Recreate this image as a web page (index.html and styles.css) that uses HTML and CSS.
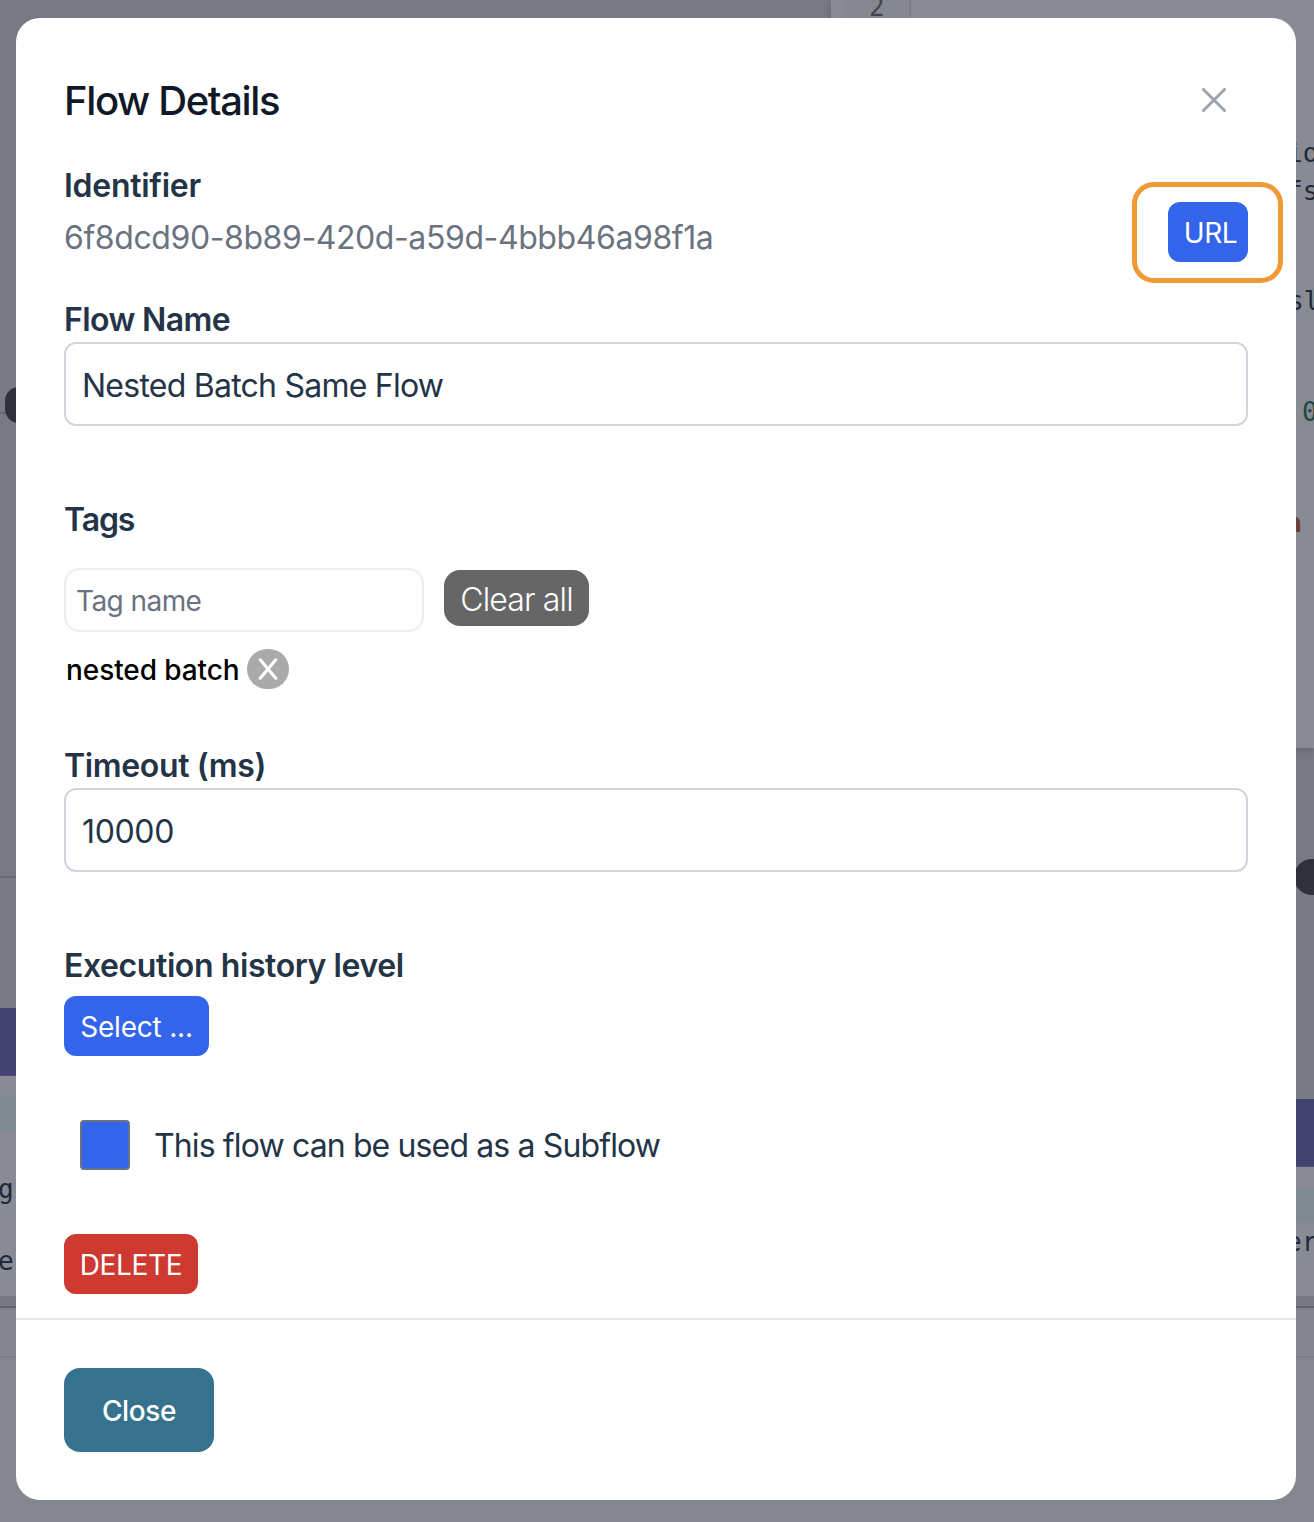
FILE: index.html
```html
<!DOCTYPE html>
<html lang="en">
<head>
<meta charset="utf-8">
<title>Flow Details</title>
<link rel="stylesheet" href="styles.css">
</head>
<body>
<div class="canvas" aria-hidden="true">
  <div class="editor"></div>
  <div class="gutter">2</div>
  <span class="code code-io">io</span>
  <span class="code code-fs">fs</span>
  <span class="code code-sl">sl</span>
  <span class="code code-num">0</span>
  <span class="code code-str">a</span>
  <div class="wire wire-top"></div>
  <div class="wire wire-bottom"></div>
  <div class="port port-left"></div>
  <div class="port port-right"></div>
  <div class="node node-left"><div class="node-title"></div><div class="node-band"></div></div>
  <div class="node node-right"><div class="node-title"></div><div class="node-band"></div></div>
  <div class="console"></div>
  <span class="code code-g">g</span>
  <span class="code code-e">e</span>
  <span class="code code-er">er</span>
</div>

<div class="modal" role="dialog" aria-labelledby="title">
  <div class="body">
    <header class="header">
      <h1 class="title" id="title">Flow Details</h1>
      <button class="dismiss" aria-label="Dismiss">
        <svg width="24" height="24" viewBox="0 0 24 24" fill="none" stroke="currentColor" stroke-width="3" stroke-linecap="round"><path d="M1.5 1.5l21 21M22.5 1.5l-21 21"/></svg>
      </button>
    </header>

    <section class="identifier">
      <div>
        <h2 class="label label-id">Identifier</h2>
        <p class="uuid">6f8dcd90-8b89-420d-a59d-4bbb46a98f1a</p>
      </div>
      <div class="url-wrap"><button class="btn btn-url">URL</button><div class="highlight"></div></div>
    </section>

    <section class="field">
      <label class="label label-name" for="name">Flow Name</label>
      <input class="input input-name" id="name" value="Nested Batch Same Flow">
    </section>

    <section class="tags">
      <h2 class="label label-tags">Tags</h2>
      <div class="tag-row">
        <input class="tag-input" placeholder="Tag name">
        <button class="clear">Clear all</button>
      </div>
      <div class="tag"><span class="tag-name">nested batch</span><button class="tag-remove" aria-label="Remove tag"><svg width="20" height="22" viewBox="0 0 20 22" fill="none" stroke="currentColor" stroke-width="3.1" stroke-linecap="round"><path d="M2.2 1.8l15.6 18.4M17.8 1.8L2.2 20.2"/></svg></button></div>
    </section>

    <section class="field">
      <label class="label label-timeout" for="timeout">Timeout (ms)</label>
      <input class="input input-timeout" id="timeout" value="10000">
    </section>

    <section class="history">
      <h2 class="label label-history">Execution history level</h2>
      <button class="btn btn-select">Select ...</button>
    </section>

    <label class="check"><span class="box"></span><span class="check-text">This flow can be used as a Subflow</span></label>

    <button class="btn btn-delete">DELETE</button>
  </div>
  <footer class="footer"><button class="close">Close</button></footer>
</div>
</body>
</html>
```
FILE: styles.css
```css
* { box-sizing: border-box; }

body {
  margin: 0;
  width: 1314px;
  height: 1522px;
  overflow: hidden;
  position: relative;
  background: #777a83;
  font-family: Inter, "Liberation Sans", sans-serif;
  color: #243447;
}

h1, h2, p { margin: 0; }
button { border: 0; padding: 0; font-family: inherit; white-space: nowrap; }

/* Dimmed flow canvas behind the dialog */
.canvas { position: absolute; inset: 0; overflow: hidden; }
.canvas > * { position: absolute; }
.editor { left: 831px; top: 0; width: 483px; height: 748px; background: #888b93; box-shadow: 0 2px 8px rgba(60, 64, 72, .4); }
.gutter {
  left: 843px; top: -18px; width: 68px; height: 50px;
  padding-left: 26px;
  border-right: 2px solid #7b7e86;
  background: #858890;
  color: #42454f;
  font: 26px/50px "DejaVu Sans Mono", monospace;
}
.code { font: 26px/36px "DejaVu Sans Mono", monospace; color: #1f293b; }
.code-io { left: 1287px; top: 135px; }
.code-fs { left: 1287px; top: 173px; }
.code-sl { left: 1288px; top: 283px; }
.code-num { left: 1302px; top: 394px; color: #20463f; }
.code-str { left: 1286px; top: 505px; color: #6a4038; font-weight: 700; }
.code-g { left: -2px; top: 1171px; }
.code-e { left: -2px; top: 1243px; }
.code-er { left: 1286px; top: 1224px; }
.wire { left: 0; width: 20px; height: 2px; background: #686a75; }
.wire-top { top: 412px; }
.wire-bottom { top: 876px; }
.port { width: 36px; height: 36px; border-radius: 14px; background: #2e313b; }
.port-left { left: 5px; top: 387px; }
.port-right { left: 1294px; top: 859px; border-radius: 18px; }
.node { width: 22px; background: #888b93; }
.node-left { left: 0; top: 1008px; height: 290px; }
.node-right { left: 1292px; top: 1099px; height: 199px; }
.node-title { height: 68px; background: #42426f; border-bottom: 1px solid #504f7b; }
.node-band { height: 36px; margin-top: 20px; background: #808891; }
.console { left: 0; right: 0; top: 1296px; height: 226px; background: linear-gradient(#767982 10px, #5d6069 10px 12px, #7d8089 12px 14px, #83868f 14px 60px, #7b7e87 60px 62px, #84878f 62px); }

.modal {
  position: relative;
  width: 1280px;
  height: 1482px;
  margin: 18px 0 0 16px;
  border-radius: 24px;
  background: #fff;
  display: flex;
  flex-direction: column;
}
.body { height: 1300px; padding: 48px 48px 24px; display: flex; flex-direction: column; align-items: stretch; }

.header { height: 70px; display: flex; align-items: center; justify-content: space-between; padding-right: 22px; }
.title { font-size: 40px; line-height: 70px; font-weight: 500; letter-spacing: -1.36px; color: #111827; }
.dismiss { display: flex; background: none; color: #9ca3af; margin-bottom: 2px; }

.label { display: block; height: 46px; font-size: 32px; line-height: 48px; font-weight: 600; }
.label-id { letter-spacing: -.28px; }
.label-name { letter-spacing: -.6px; }
.label-tags { letter-spacing: -1.1px; }
.label-timeout { letter-spacing: -.35px; }
.label-history { letter-spacing: -.41px; }
.identifier { display: flex; justify-content: space-between; height: 160px; padding-top: 26px; }
.uuid { margin-top: 6px; font-size: 32px; line-height: 48px; letter-spacing: -.41px; color: #6b7280; }
.url-wrap { position: relative; height: 60px; margin-top: 40px; }
.highlight { position: absolute; left: -36px; top: -20px; width: 151px; height: 101px; border: 5px solid #f09a37; border-radius: 22px; }

.btn { height: 60px; padding-top: 1px; border-radius: 12px; background: #3364ea; color: #fff; font-size: 28px; line-height: 60px; }
.btn-url { width: 80px; display: block; padding-left: 5px; letter-spacing: -.4px; }
.btn-select { width: 145px; margin-top: 8px; display: block; letter-spacing: -.2px; }
.btn-delete { width: 134px; background: #ce3930; margin-top: 64px; letter-spacing: -.35px; }

.input {
  display: block; width: 100%; height: 84px;
  padding: 2px 16px 0;
  border: 2px solid #d1d5db; border-radius: 12px;
  background: #fff; color: #243447;
  font: 400 32px/48px Inter, "Liberation Sans", sans-serif;
}
.input-name { letter-spacing: -.76px; }
.input-timeout { letter-spacing: -.35px; }

.tags { margin-top: 70px; height: 246px; }
.tag-row { display: flex; gap: 20px; margin-top: 26px; }
.tag-input {
  width: 360px; height: 64px; padding: 1px 10px 0;
  border: 2px solid #eee; border-radius: 16px;
  font: 400 28px/40px Inter, "Liberation Sans", sans-serif;
  letter-spacing: -.57px;
}
.tag-input::placeholder { color: #6b7280; opacity: 1; }
.clear { width: 145px; height: 56px; margin-top: 2px; padding-top: 2px; border-radius: 16px; background: #666; color: #fff; font-size: 32px; line-height: 56px; font-weight: 300; letter-spacing: -.85px; }
.tag { display: flex; align-items: center; height: 40px; margin-top: 17px; padding-left: 2px; color: #000; font-size: 28px; font-weight: 500; letter-spacing: -.08px; }
.tag-name { width: 181px; padding-top: 1px; white-space: nowrap; }
.tag-remove { display: flex; align-items: center; justify-content: center; width: 42px; height: 40px; border-radius: 20px; background: #aaa; color: #fff; }

.history { margin-top: 70px; }
.check { display: flex; align-items: center; gap: 24px; height: 50px; margin-top: 64px; padding-left: 16px; font-size: 32px; }
.check-text { letter-spacing: -.87px; }
.box { width: 50px; height: 50px; border: 2px solid #6b7280; border-radius: 4px; background: #3364ea; }

.footer { flex: 1; padding: 48px; border-top: 2px solid #e5e7eb; }
.close { width: 150px; height: 84px; padding-top: 1px; border-radius: 16px; background: #36728e; color: #fff; font-size: 28px; font-weight: 500; letter-spacing: -.4px; }
```
